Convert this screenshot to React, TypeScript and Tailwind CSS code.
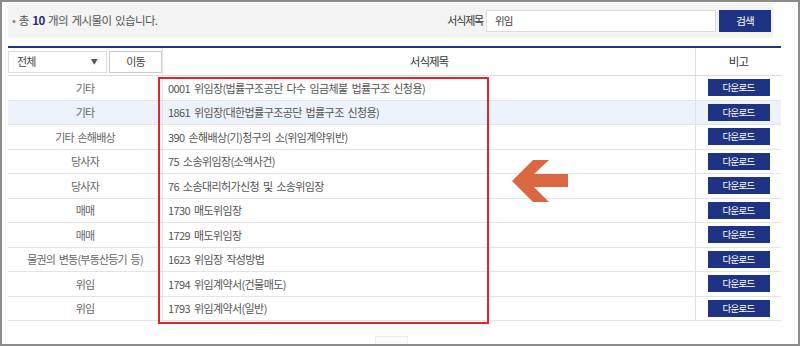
import React from "react";

const rows = [
  { cat: "기타", title: "0001 위임장(법률구조공단 다수 임금체불 법률구조 신청용)" },
  { cat: "기타", title: "1861 위임장(대한법률구조공단 법률구조 신청용)", hl: true },
  { cat: "기타 손해배상", title: "390 손해배상(기)청구의 소(위임계약위반)" },
  { cat: "당사자", title: "75 소송위임장(소액사건)" },
  { cat: "당사자", title: "76 소송대리허가신청 및 소송위임장" },
  { cat: "매매", title: "1730 매도위임장" },
  { cat: "매매", title: "1729 매도위임장" },
  { cat: "물권의 변동(부동산등기 등)", title: "1623 위임장 작성방법" },
  { cat: "위임", title: "1794 위임계약서(건물매도)" },
  { cat: "위임", title: "1793 위임계약서(일반)" },
];

const font = "font-['Noto_Sans_CJK_KR','Noto_Sans',sans-serif]";

export default function App() {
  return (
    <div
      className={`relative w-[800px] h-[346px] overflow-hidden border-2 border-[#8c8c8c] bg-white ${font}`}
    >
      <div className="pl-[6px] pt-[1px]">
        {/* search bar */}
        <div className="flex h-[35px] w-[765px] items-center justify-between bg-[#f4f4f4] pl-[4px] pr-[2px]">
          <p className="text-[11.5px] tracking-[-0.6px] [word-spacing:1.5px] text-[#555]">
            <span className="text-[#888]">•</span> 총{" "}
            <b className="font-bold text-[#1f2f6e]">10</b> 개의 게시물이 있습니다.
          </p>
          <div className="flex items-center">
            <span className="mr-[3px] text-[11px] tracking-[-1.2px] text-[#333]">서식제목</span>
            <div className="flex h-[22px] w-[230px] items-center border border-[#ddd] bg-white pl-[8px] text-[10.5px] tracking-[-1px] text-[#444]">
              위임
            </div>
            <button className="ml-[3px] h-[22px] w-[52px] bg-[#1f3384] text-[10.5px] tracking-[-1px] text-white">
              검색
            </button>
          </div>
        </div>

        {/* table */}
        <div className="mt-[8px] w-[773px] border-t-2 border-[#23357f]">
          <div className="grid h-[28px] grid-cols-[155px_532px_86px] border-b border-[#dcdcdc]">
            <div className="flex items-center gap-[2px] border-r border-[#e6e6e6]">
              <div className="flex h-[22px] w-[99px] items-center justify-between border border-[#ddd] bg-white pl-[8px] pr-[9px] text-[11px] tracking-[-0.8px] text-[#444]">
                <span>전체</span>
                <span className="text-[7px] text-[#555]">▼</span>
              </div>
              <div className="flex h-[22px] w-[53px] items-center justify-center border border-[#ccc] bg-white text-[11px] tracking-[-0.8px] text-[#444]">
                이동
              </div>
            </div>
            <div className="flex items-center justify-center text-[11.5px] tracking-[-1px] text-[#333]">
              서식제목
            </div>
            <div className="flex items-center justify-center border-l border-[#e0e0e0] text-[11.5px] tracking-[-0.8px] text-[#333]">
              비고
            </div>
          </div>

          {rows.map((r, i) => (
            <div
              key={i}
              className={`grid h-[24.5px] grid-cols-[155px_532px_86px] border-b border-[#e4e4e4] ${
                r.hl ? "bg-[#eef2fa]" : "bg-white"
              }`}
            >
              <div className="flex items-center justify-center border-r border-[#e6e6e6] text-[11px] tracking-[-0.8px] [word-spacing:2px] text-[#666]">
                {r.cat}
              </div>
              <div className="flex items-center pl-[5px] text-[11px] tracking-[-0.6px] [word-spacing:2px] text-[#555]">
                {r.title}
              </div>
              <div className="flex items-center justify-center border-l border-[#e0e0e0]">
                <button className="h-[17px] w-[62px] bg-[#1f3384] text-[9.5px] leading-[17px] tracking-[-0.8px] text-white">
                  다운로드
                </button>
              </div>
            </div>
          ))}
        </div>

        <div className="flex w-[773px] justify-center pr-[6px]">
          <div className="mt-[15px] h-[20px] w-[33px] border border-[#eee] bg-[#fafafa]" />
        </div>
      </div>

      {/* highlight box */}
      <div className="pointer-events-none absolute left-[156px] top-[75px] h-[247px] w-[331px] border-2 border-[#e0262c]" />

      {/* arrow */}
      <svg
        className="absolute left-[510px] top-[158px]"
        width="58"
        height="44"
        viewBox="0 0 58 44"
      >
        <polygon
          points="0,21 21,0 37,0 22,14 56,14 56,27 22,27 37,42 21,42"
          fill="#dc6641"
        />
      </svg>
    </div>
  );
}
